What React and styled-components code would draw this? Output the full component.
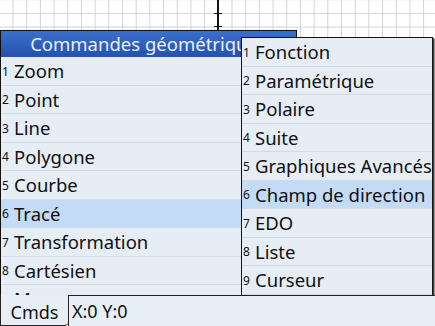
import styled, { createGlobalStyle } from "styled-components";

const GlobalStyle = createGlobalStyle`
  html, body {
    margin: 0;
    padding: 0;
    width: 435px;
    height: 326px;
    overflow: hidden;
    background: #e8eef6;
    font-family: "Noto Sans", "Open Sans", sans-serif;
  }
`;

const Screen = styled.div`
  display: flex;
  flex-direction: column;
  width: 435px;
  height: 326px;
`;

const Graph = styled.div`
  position: relative;
  flex: 1;
  overflow: hidden;
  background-color: #fff;
  background-image:
    linear-gradient(to right, #d2d2d2 1px, transparent 1px),
    linear-gradient(to bottom, #d2d2d2 1px, transparent 1px);
  background-size: 13.7px 13.7px;
  background-position: 12.5px -0.8px;
`;

const Axis = styled.div`
  position: absolute;
  left: 217px;
  top: 0;
  width: 2px;
  height: 30px;
  background: #111;
`;

const Tick = styled.div`
  position: absolute;
  left: 214px;
  top: ${(p) => p.$y}px;
  width: 8px;
  height: 1px;
  background: #111;
`;

const Menu = styled.div`
  position: absolute;
  left: ${(p) => p.$left}px;
  top: ${(p) => p.$top}px;
  width: ${(p) => p.$width}px;
  background: #e6edf5;
  border: 1px solid #111;
  box-sizing: border-box;
  display: flex;
  flex-direction: column;
  box-shadow: ${(p) => (p.$shadow ? "1px 1px 0 #444, 2px 2px 1px #999" : "none")};
  z-index: ${(p) => p.$z};
`;

const Title = styled.div`
  height: 26px;
  background: linear-gradient(#3b6fcc, #2452ad);
  color: #e9f0ff;
  font-size: 18.5px;
  line-height: 26px;
  white-space: nowrap;
  overflow: hidden;
  text-align: center;
`;

const Item = styled.div`
  display: flex;
  align-items: center;
  height: 28.5px;
  box-sizing: border-box;
  border-bottom: 1px solid #d2dae3;
  background: ${(p) => (p.$active ? "#c4dbf6" : "#e6edf5")};
  padding-left: 1px;
  padding-top: 1px;
  font-size: 18.5px;
  line-height: 26px;
  color: #111;
  white-space: nowrap;
`;

const Num = styled.span`
  font-size: 12px;
  line-height: 13px;
  width: 10px;
  margin-right: 2px;
  color: #111;
`;

const Bottom = styled.div`
  display: flex;
  height: 31px;
  position: relative;
  z-index: 5;
  background: #e8eef6;
`;

const Tab = styled.div`
  width: 68px;
  box-sizing: border-box;
  border-left: 1px solid #222;
  border-bottom: 1px solid #222;
  border-bottom-right-radius: 4px;
  font-size: 18px;
  line-height: 28px;
  padding-top: 3px;
  text-align: center;
  color: #111;
`;

const Status = styled.div`
  flex: 1;
  border-top: 1px solid #222;
  border-left: 1px solid #222;
  font-size: 18px;
  line-height: 28px;
  padding-top: 1px;
  padding-left: 3px;
  color: #111;
`;

const main = [
  "Zoom",
  "Point",
  "Line",
  "Polygone",
  "Courbe",
  "Tracé",
  "Transformation",
  "Cartésien",
  "Mesures",
];

const sub = [
  "Fonction",
  "Paramétrique",
  "Polaire",
  "Suite",
  "Graphiques Avancés",
  "Champ de direction",
  "EDO",
  "Liste",
  "Curseur",
];

export default function App() {
  return (
    <Screen>
      <GlobalStyle />
      <Graph>
        <Axis />
        <Tick $y={13} />
        <Tick $y={26} />
        <Menu $left={0} $top={30} $width={297} $z={1}>
          <Title>Commandes géométriques</Title>
          {main.map((t, i) => (
            <Item key={t} $active={i === 5}>
              <Num>{i + 1}</Num>
              {t}
            </Item>
          ))}
        </Menu>
        <Menu $left={241} $top={37} $width={192} $z={2} $shadow>
          {sub.map((t, i) => (
            <Item key={t} $active={i === 5}>
              <Num>{i + 1}</Num>
              {t}
            </Item>
          ))}
        </Menu>
      </Graph>
      <Bottom>
        <Tab>Cmds</Tab>
        <Status>X:0 Y:0</Status>
      </Bottom>
    </Screen>
  );
}
